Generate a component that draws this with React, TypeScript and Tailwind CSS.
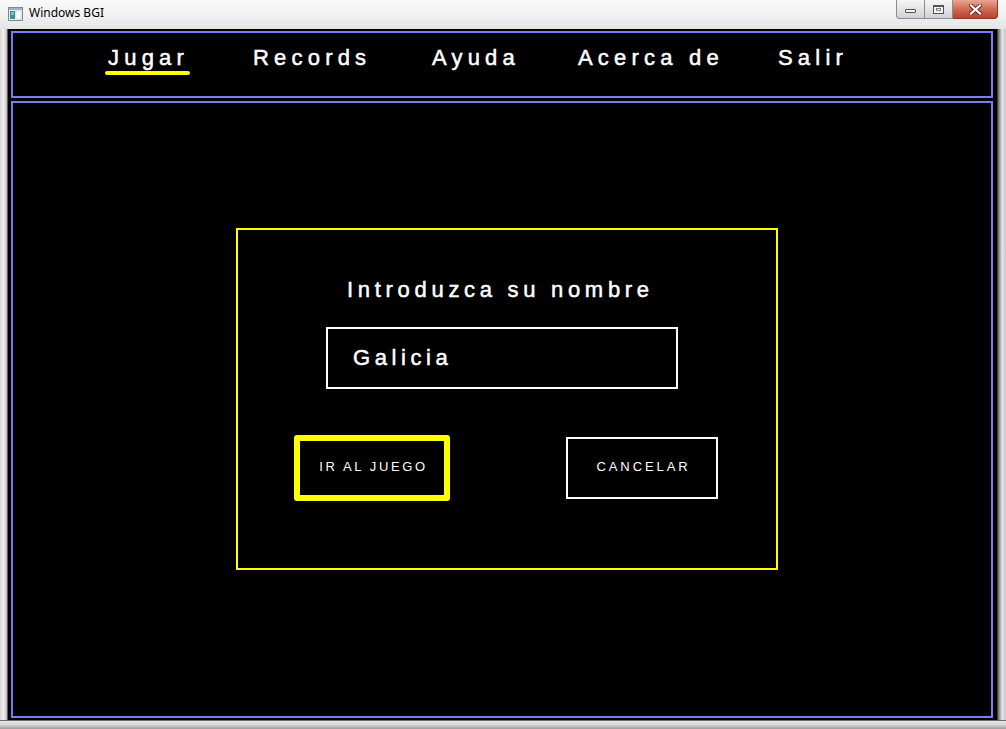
import React from "react";

function WinIcon() {
  return (
    <svg width="15" height="14" viewBox="0 0 15 14">
      <rect x="0.5" y="0.5" width="14" height="13" fill="#e8eef2" stroke="#7d8a95" />
      <rect x="1" y="1" width="13" height="2" fill="#9fb3c4" />
      <rect x="2" y="4" width="5" height="8" fill="#3f8f8a" />
      <rect x="3" y="5" width="3" height="3" fill="#7ec1c0" />
      <rect x="8" y="4" width="5" height="8" fill="#ffffff" stroke="#b8c4cc" strokeWidth="0.5" />
    </svg>
  );
}

function Controls() {
  return (
    <div className="flex self-start mr-[8px] h-[19px]">
      <div className="w-[29px] h-[19px] rounded-bl-[4px] border border-t-0 border-[#8a8e94] bg-gradient-to-b from-[#f6f6f6] via-[#e4e4e4] to-[#cfd1d4] flex items-center justify-center">
        <div className="w-[11px] h-[4px] rounded-[1px] border border-[#4e5358] bg-[#f4f4f4] mt-[3px]" />
      </div>
      <div className="w-[28px] h-[19px] border-b border-r border-[#8a8e94] bg-gradient-to-b from-[#f6f6f6] via-[#e4e4e4] to-[#cfd1d4] flex items-center justify-center">
        <div className="w-[11px] h-[9px] border border-t-[2px] border-[#4e5358] bg-[#f4f4f4] flex items-center justify-center">
          <div className="w-[5px] h-[3px] border border-[#7d8288]" />
        </div>
      </div>
      <div className="w-[45px] h-[19px] rounded-br-[4px] border border-t-0 border-l-0 border-[#8c3a2e] bg-gradient-to-b from-[#e9a592] via-[#d26a54] to-[#b9402c] flex items-center justify-center">
        <svg width="13" height="11" viewBox="0 0 13 11">
          <path d="M2 1.5 L11 9.5 M11 1.5 L2 9.5" stroke="#5b2a22" strokeWidth="4" strokeLinecap="square" />
          <path d="M2 1.5 L11 9.5 M11 1.5 L2 9.5" stroke="#ffffff" strokeWidth="2.2" strokeLinecap="square" />
        </svg>
      </div>
    </div>
  );
}

const navItems: { label: string; w: string; active?: boolean }[] = [
  { label: "Jugar", w: "w-[145px]", active: true },
  { label: "Records", w: "w-[179px]" },
  { label: "Ayuda", w: "w-[146px]" },
  { label: "Acerca de", w: "w-[200px]" },
  { label: "Salir", w: "w-[120px]" },
];

export default function App() {
  return (
    <div className="w-[1006px] h-[729px] flex flex-col bg-[#dcdee1] font-['Liberation_Sans',Arial,sans-serif] overflow-hidden">
      {/* Title bar */}
      <div className="h-[29px] flex items-start bg-gradient-to-b from-[#fafafa] via-[#f1f1f1] to-[#e4e5e7]">
        <div className="ml-[8px] mt-[7px]">
          <WinIcon />
        </div>
        <div className="ml-[6px] mt-[5px] text-[12px] leading-[16px] text-black font-['Noto_Sans',sans-serif]">
          Windows BGI
        </div>
        <div className="flex-1" />
        <Controls />
      </div>

      {/* Middle */}
      <div className="flex h-[691px]">
        <div className="w-[8px] bg-gradient-to-r from-[#d6d6d6] via-[#f0f0f0] to-[#bdbdbd] border-r border-[#5c5c5c]" />
        <div className="w-[989px] bg-black flex flex-col pt-[2px] pl-[3px] pr-[4px] pb-[2px]">
          {/* Nav */}
          <div className="h-[67px] border-2 border-[#7b7bf7] flex items-start pl-[95px] pt-[12px]">
            {navItems.map((it) => (
              <div key={it.label} className={`${it.w} flex flex-col items-start`}>
                <span className="text-[22px] leading-[25px] tracking-[5.2px] text-white whitespace-nowrap [-webkit-text-stroke:0.5px_white]">
                  {it.label}
                </span>
                {it.active && (
                  <div className="-ml-[3px] mt-[1px] w-[85px] h-[4px] rounded-full bg-[#ffff00]" />
                )}
              </div>
            ))}
          </div>
          {/* Main */}
          <div className="mt-[3px] h-[617px] border-2 border-[#7b7bf7] flex flex-col items-start">
            <div className="ml-[223px] mt-[125px] w-[542px] h-[342px] border-2 border-[#ffff00] flex flex-col items-start">
              <p className="ml-[109px] mt-[47px] text-[22px] leading-[25px] tracking-[4.7px] text-white whitespace-nowrap [-webkit-text-stroke:0.5px_white]">
                Introduzca su nombre
              </p>
              <div className="ml-[88px] mt-[25px] w-[352px] h-[62px] border-2 border-white pl-[25px] pt-[17px]">
                <span className="text-[22px] leading-[24px] tracking-[4.6px] text-white [-webkit-text-stroke:0.5px_white]">Galicia</span>
              </div>
              <div className="ml-[56px] mt-[46px] flex items-start">
                <div className="w-[156px] h-[66px] border-[6px] border-[#ffff00] rounded-[3px] flex items-center justify-center">
                  <span className="text-[13px] leading-[16px] tracking-[2.6px] text-white whitespace-nowrap mt-[-3px] ml-[3px] font-light">
                    IR AL JUEGO
                  </span>
                </div>
                <div className="ml-[116px] mt-[2px] w-[152px] h-[62px] border-2 border-white flex items-center justify-center">
                  <span className="text-[13px] leading-[16px] tracking-[2.9px] text-white whitespace-nowrap mt-[-3px] ml-[3px]">
                    CANCELAR
                  </span>
                </div>
              </div>
            </div>
          </div>
        </div>
        <div className="flex-1 bg-gradient-to-r from-[#6a6a6a] via-[#e6e6e6] to-[#c8c8c8] border-l border-[#3a3a3a]" />
      </div>

      {/* Bottom frame */}
      <div className="flex-1 bg-gradient-to-b from-[#e8e8e8] via-[#d4d4d4] to-[#9c9c9c] border-t border-[#6a6a6a]" />
    </div>
  );
}
